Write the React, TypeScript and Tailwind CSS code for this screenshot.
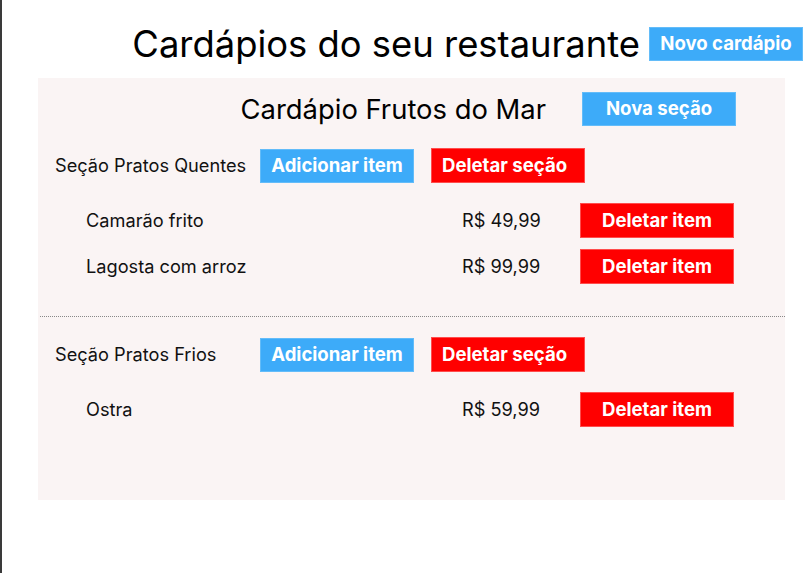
import React from "react";

type Item = { id: string; name: string; price: string };
type Section = { id: string; name: string; items: Item[] };

const sections: Section[] = [
  {
    id: "quentes",
    name: "Seção Pratos Quentes",
    items: [
      { id: "camarao", name: "Camarão frito", price: "R$ 49,99" },
      { id: "lagosta", name: "Lagosta com arroz", price: "R$ 99,99" },
    ],
  },
  {
    id: "frios",
    name: "Seção Pratos Frios",
    items: [{ id: "ostra", name: "Ostra", price: "R$ 59,99" }],
  },
];

const blueBtn =
  "h-[34px] w-[154px] bg-[#3dabf9] border border-[#63bcf9] text-white font-bold text-[18.6px] flex items-center justify-center";
const redBtn =
  "h-[35px] w-[154px] bg-[#ff0000] border border-[#ff4d4d] text-white font-bold text-[18.6px] flex items-center";

const SectionBlock = ({ section }: { section: Section }) => (
  <div className="flex flex-col">
    {/* section header */}
    <div className="flex items-center pl-[17px]">
      <span className="w-[205px] text-[18.2px] text-[#111]">{section.name}</span>
      <button className={blueBtn}>Adicionar item</button>
      <button className={`${redBtn} ml-[17px] pl-[10px]`}>Deletar seção</button>
    </div>

    {/* items */}
    <div className="flex flex-col gap-[11px] mt-[20px]">
      {section.items.map((item) => (
        <div key={item.id} className="flex items-center pl-[48px]">
          <span className="w-[376px] text-[18.2px] text-[#111]">{item.name}</span>
          <span className="w-[118px] text-[18.2px] text-[#111]">{item.price}</span>
          <button className={`${redBtn} justify-center`}>Deletar item</button>
        </div>
      ))}
    </div>
  </div>
);

export default function App() {
  return (
    <div
      className="min-h-[573px] w-[811px] bg-white border-l-2 border-[#3a3a3a] text-black"
      style={{ fontFamily: "Inter, 'Noto Sans', sans-serif" }}
    >
      {/* top header */}
      <div className="flex items-center justify-end gap-[9px] pt-[26px] pr-[8px]">
        <h1 className="text-[36.4px] leading-[36px] font-normal">Cardápios do seu restaurante</h1>
        <button className={blueBtn}>Novo cardápio</button>
      </div>

      {/* menu panel */}
      <div className="ml-[36px] mt-[16px] w-[747px] h-[422px] bg-[#faf4f4] pt-[14px]">
        <div className="flex items-center justify-end gap-[36px] pr-[49px]">
          <h2 className="text-[27.4px] leading-[34px] font-normal">Cardápio Frutos do Mar</h2>
          <button className={blueBtn}>Nova seção</button>
        </div>

        <div className="mt-[22px]">
          <SectionBlock section={sections[0]} />
        </div>

        <div className="mt-[32px] ml-[2px] border-t border-dotted border-[#888]" />

        <div className="mt-[20px]">
          <SectionBlock section={sections[1]} />
        </div>
      </div>
    </div>
  );
}
